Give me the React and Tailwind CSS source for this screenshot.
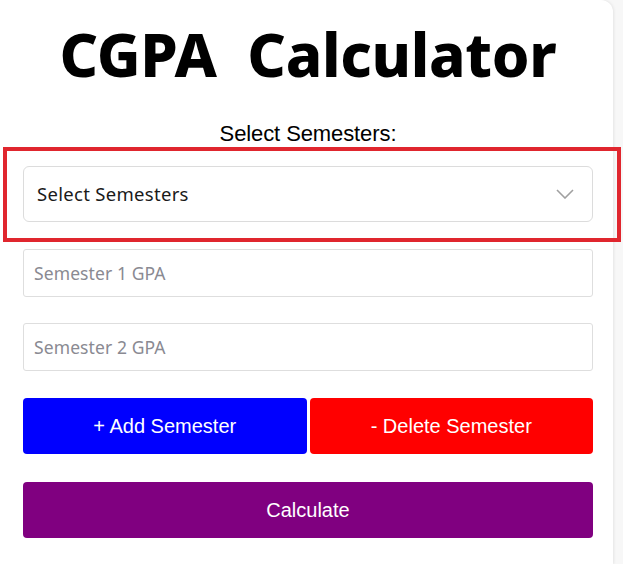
import { useState } from 'react';

const App = () => {
  const [count, setCount] = useState(2);
  const semesters = Array.from({ length: count }, (_, i) => i + 1);

  return (
    <div className="min-h-screen bg-[#f7f7f7] overflow-hidden">
      <div className="w-[613px] min-h-[564px] bg-white rounded-tr-xl shadow-[1px_0_3px_rgba(0,0,0,0.08)] pl-[23px] pr-[20px] pt-[14px]">
        {/* Title */}
        <h1
          className="text-center text-[60px] leading-[80px] font-extrabold text-black tracking-[-0.3px]"
          style={{ fontFamily: '"Noto Sans", sans-serif' }}
        >
          CGPA&nbsp;&nbsp;Calculator
        </h1>

        <p
          className="text-center text-[22px] leading-[24px] text-black mt-[28px] tracking-[-0.1px]"
          style={{ fontFamily: '"Liberation Sans", Arial, sans-serif' }}
        >
          Select Semesters:
        </p>

        {/* Highlighted select */}
        <div className="ml-[-20px] mr-[-28px] mt-[1px] border-[4px] border-[#e0262e] pl-[16px] pr-[24px] pt-[15px] pb-[16px]">
          <div className="h-[56px] rounded-md border border-[#dcdcdc] flex items-center justify-between pl-[13px] pr-[18px] bg-white">
            <span
              className="text-[18.5px] text-[#1a1a1a] tracking-[0.3px]"
              style={{ fontFamily: '"Noto Sans", sans-serif' }}
            >
              Select Semesters
            </span>
            <svg width="18" height="10" viewBox="0 0 18 10" fill="none" stroke="#a0a0a0" strokeWidth="1.6">
              <path d="M1 1l8 8 8-8" />
            </svg>
          </div>
        </div>

        {/* Inputs */}
        <div className="flex flex-col gap-[26px] mt-[7px]">
          {semesters.map((n) => (
            <input
              key={n}
              placeholder={`Semester ${n} GPA`}
              className="h-[48px] w-full rounded-[3px] border border-[#dedede] px-[10px] text-[17.5px] tracking-[0.1px] placeholder:text-[#8a8a92] outline-none"
              style={{ fontFamily: '"Noto Sans", sans-serif' }}
            />
          ))}
        </div>

        {/* Add / delete */}
        <div
          className="flex gap-[3px] mt-[27px]"
          style={{ fontFamily: '"Liberation Sans", Arial, sans-serif' }}
        >
          <button
            onClick={() => setCount(count + 1)}
            className="flex-1 h-[56px] rounded-[4px] bg-[#0000ff] text-white text-[20px]"
          >
            + Add Semester
          </button>
          <button
            onClick={() => setCount(Math.max(1, count - 1))}
            className="flex-1 h-[56px] rounded-[4px] bg-[#ff0000] text-white text-[20px]"
          >
            - Delete Semester
          </button>
        </div>

        <button
          className="w-full h-[56px] mt-[28px] rounded-[4px] bg-[#800080] text-white text-[20px]"
          style={{ fontFamily: '"Liberation Sans", Arial, sans-serif' }}
        >
          Calculate
        </button>
      </div>
    </div>
  );
};

export default App;
